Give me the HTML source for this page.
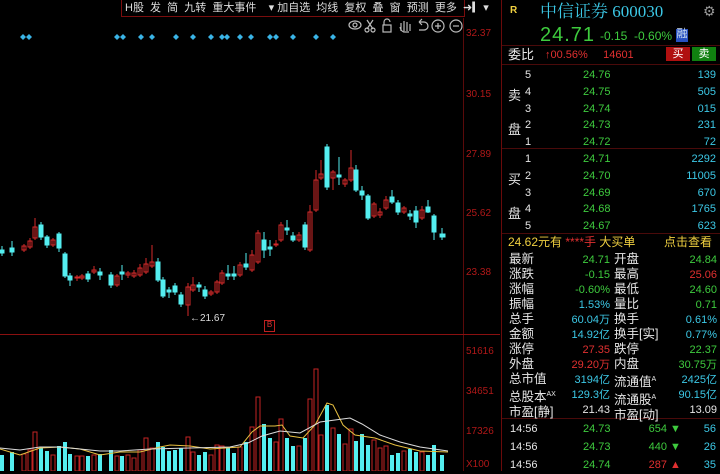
<!DOCTYPE html>
<html><head><meta charset="utf-8"><style>
*{margin:0;padding:0}
body{width:720px;height:471px;background:#000;overflow:hidden;position:relative;font-family:"Liberation Sans","Noto Sans CJK SC",sans-serif;color:#ddd}
.a{position:absolute;white-space:nowrap;line-height:1}
.tb{font-size:11px;color:#ddd}
.ax{font-size:10px;color:#b01818}
.rp{font-size:13px}
.g{color:#3ecb3e}.c{color:#3cc8e6}.r{color:#e03030}.w{color:#e6e6e6}.y{color:#f0d040}
</style></head><body>

<!-- toolbar -->
<div class="a" style="left:121px;top:0;width:342px;height:16px;border:1px solid #7a0d0d;border-top:none"></div>
<div class="a tb" style="left:125px;top:3px;word-spacing:0">H股&nbsp; 发&nbsp; 简&nbsp; 九转&nbsp; 重大事件&nbsp;&nbsp;&nbsp; ▾ 加自选&nbsp; 均线&nbsp; 复权&nbsp; 叠&nbsp; 窗&nbsp; 预测&nbsp; 更多&nbsp; ➜▎▾</div>
<svg class="a" style="left:345px;top:17px" width="120" height="16" stroke="#bbb" fill="none" stroke-width="1.2">
<ellipse cx="10" cy="8" rx="6" ry="4"/><circle cx="10" cy="8" r="2"/>
<path d="M22 3 L28 12 M28 3 L22 12"/><circle cx="22" cy="13" r="2"/><circle cx="28" cy="13" r="2"/>
<rect x="38" y="8" width="8" height="7"/><path d="M39 8 V5 a3 3 0 0 1 6 0"/>
<path d="M56 14 V6 M59 14 V4 M62 14 V5 M65 14 V7 M55 10 Q56 15 60 15 H64"/>
<path d="M74 5 H79 a4 4 0 0 1 0 8 H74 M74 5 l3 -3 M74 5 l3 3"/>
<circle cx="93" cy="9" r="6"/><path d="M90 9 H96 M93 6 V12"/>
<circle cx="111" cy="9" r="6"/><path d="M108 9 H114"/>
</svg>

<!-- diamonds -->
<svg class="a" style="left:0;top:32px" width="340" height="10" fill="#3ab4e6">
<defs><path id="d" d="M0 5 L3 2 L6 5 L3 8Z"/></defs>
<use href="#d" x="20"/><use href="#d" x="26"/><use href="#d" x="114"/><use href="#d" x="120"/><use href="#d" x="138"/><use href="#d" x="149"/><use href="#d" x="173"/><use href="#d" x="190"/><use href="#d" x="208"/><use href="#d" x="219"/><use href="#d" x="224"/><use href="#d" x="237"/><use href="#d" x="248"/><use href="#d" x="267"/><use href="#d" x="273"/><use href="#d" x="290"/><use href="#d" x="313"/><use href="#d" x="330"/>
</svg>

<!-- axes -->
<div class="a" style="left:463px;top:18px;width:1px;height:453px;background:#5a0a0a"></div>
<div class="a" style="left:0;top:334px;width:500px;height:1px;background:#8a1010"></div>
<div class="a" style="left:501px;top:0;width:1px;height:471px;background:#6a0a0a"></div>
<div class="a ax" style="left:466px;top:29px">32.37</div>
<div class="a ax" style="left:466px;top:90px">30.15</div>
<div class="a ax" style="left:466px;top:150px">27.89</div>
<div class="a ax" style="left:466px;top:209px">25.62</div>
<div class="a ax" style="left:466px;top:268px">23.38</div>
<div class="a ax" style="left:466px;top:347px">51616</div>
<div class="a ax" style="left:466px;top:387px">34651</div>
<div class="a ax" style="left:466px;top:427px">17326</div>
<div class="a ax" style="left:466px;top:460px">X100</div>
<div class="a" style="left:190px;top:314px;font-size:10px;color:#ddd">←21.67</div>
<div class="a" style="left:264px;top:320px;width:9px;height:10px;border:1px solid #c02020;font-size:8px;color:#e03030;text-align:center">B</div>

<!-- candles -->
<svg class="a" style="left:0;top:0" width="463" height="471">
<g stroke="#d42a2a" fill="none" stroke-width="1">
<path d="M24 244V252M30 238V249M35 218V240M53 238V247M77 275V281M82 274V280M94 266V274M117 274V287M128 271V278M134 270V278M140 264V277M146 258V274M152 245V268M188 283V316M193 277V292M211 290V296M217 280V294M222 270V285M240 262V277M252 250V272M258 230V264M276 240V247M281 222V242M299 232V242M310 205V252M316 170V212M321 160V180M333 170V190M345 178V187M351 150V182M374 202V218M380 208V218M386 196V210M404 206V214M422 206V220"/>
<rect x="22" y="246" width="4" height="4"/><rect x="28" y="241" width="4" height="6"/><rect x="33" y="227" width="4" height="11"/><rect x="51" y="240" width="4" height="5"/><rect x="75" y="277" width="4" height="1"/><rect x="80" y="276" width="4" height="2"/><rect x="92" y="270" width="4" height="2"/><rect x="115" y="276" width="4" height="9"/><rect x="126" y="273" width="4" height="2"/><rect x="132" y="273" width="4" height="3"/><rect x="138" y="268" width="4" height="7"/><rect x="144" y="264" width="4" height="8"/><rect x="150" y="262" width="4" height="4"/><rect x="186" y="287" width="4" height="18"/><rect x="191" y="285" width="4" height="5"/><rect x="209" y="292" width="4" height="2"/><rect x="215" y="282" width="4" height="10"/><rect x="220" y="273" width="4" height="10"/><rect x="238" y="265" width="4" height="10"/><rect x="250" y="255" width="4" height="15"/><rect x="256" y="233" width="4" height="29"/><rect x="274" y="244" width="4" height="1"/><rect x="279" y="225" width="4" height="15"/><rect x="297" y="235" width="4" height="5"/><rect x="308" y="212" width="4" height="38"/><rect x="314" y="180" width="4" height="30"/><rect x="319" y="174" width="4" height="4"/><rect x="331" y="172" width="4" height="6"/><rect x="343" y="180" width="4" height="4"/><rect x="349" y="168" width="4" height="12"/><rect x="372" y="204" width="4" height="12"/><rect x="378" y="212" width="4" height="3"/><rect x="384" y="200" width="4" height="8"/><rect x="402" y="208" width="4" height="4"/><rect x="420" y="210" width="4" height="8"/>
</g>
<g stroke="#54eef0" fill="#54eef0" stroke-width="1">
<path d="M2 246V256M12 241V256M41 222V240M47 235V248M59 232V252M65 252V278M70 273V286M88 271V282M100 268V280M111 272V288M122 265V280M158 258V282M163 277V298M169 287V298M175 283V295M181 292V307M199 282V292M205 286V299M228 265V280M234 266V280M246 253V270M264 232V258M270 240V256M287 220V235M293 232V242M305 222V250M327 144V190M339 157V185M356 165V192M362 186V200M368 194V220M392 190V204M398 200V215M410 210V220M416 206V228M428 200V213M434 214V240M442 228V240"/>
<rect x="0" y="250" width="4" height="3"/><rect x="10" y="248" width="4" height="4"/><rect x="39" y="225" width="4" height="12"/><rect x="45" y="237" width="4" height="8"/><rect x="57" y="234" width="4" height="14"/><rect x="63" y="254" width="4" height="22"/><rect x="68" y="276" width="4" height="4"/><rect x="86" y="274" width="4" height="5"/><rect x="98" y="272" width="4" height="3"/><rect x="109" y="275" width="4" height="10"/><rect x="120" y="272" width="4" height="2"/><rect x="156" y="262" width="4" height="18"/><rect x="161" y="280" width="4" height="16"/><rect x="167" y="290" width="4" height="2"/><rect x="173" y="286" width="4" height="6"/><rect x="179" y="295" width="4" height="9"/><rect x="197" y="285" width="4" height="2"/><rect x="203" y="290" width="4" height="6"/><rect x="226" y="274" width="4" height="2"/><rect x="232" y="274" width="4" height="2"/><rect x="244" y="264" width="4" height="3"/><rect x="262" y="240" width="4" height="10"/><rect x="268" y="247" width="4" height="2"/><rect x="285" y="228" width="4" height="2"/><rect x="291" y="236" width="4" height="4"/><rect x="303" y="225" width="4" height="22"/><rect x="325" y="147" width="4" height="40"/><rect x="337" y="175" width="4" height="2"/><rect x="354" y="170" width="4" height="20"/><rect x="360" y="191" width="4" height="4"/><rect x="366" y="196" width="4" height="22"/><rect x="390" y="197" width="4" height="5"/><rect x="396" y="203" width="4" height="9"/><rect x="408" y="214" width="4" height="2"/><rect x="414" y="211" width="4" height="11"/><rect x="426" y="207" width="4" height="5"/><rect x="432" y="216" width="4" height="16"/><rect x="440" y="234" width="5" height="3"/>
</g>
<!-- volume -->
<g stroke="#c42424" fill="none">
<rect x="22" y="454" width="4" height="17"/><rect x="28" y="450" width="4" height="21"/><rect x="33" y="432" width="4" height="39"/><rect x="51" y="455" width="4" height="16"/><rect x="75" y="456" width="4" height="15"/><rect x="80" y="456" width="4" height="15"/><rect x="92" y="455" width="4" height="16"/><rect x="115" y="456" width="4" height="15"/><rect x="126" y="455" width="4" height="16"/><rect x="132" y="458" width="4" height="13"/><rect x="138" y="450" width="4" height="21"/><rect x="144" y="438" width="4" height="33"/><rect x="150" y="448" width="4" height="23"/><rect x="186" y="437" width="4" height="34"/><rect x="191" y="452" width="4" height="19"/><rect x="209" y="455" width="4" height="16"/><rect x="215" y="445" width="4" height="26"/><rect x="220" y="446" width="4" height="25"/><rect x="238" y="447" width="4" height="24"/><rect x="250" y="427" width="4" height="44"/><rect x="256" y="397" width="4" height="74"/><rect x="274" y="442" width="4" height="29"/><rect x="279" y="419" width="4" height="52"/><rect x="297" y="446" width="4" height="25"/><rect x="308" y="399" width="4" height="72"/><rect x="314" y="369" width="4" height="102"/><rect x="319" y="435" width="4" height="36"/><rect x="331" y="428" width="4" height="43"/><rect x="343" y="444" width="4" height="27"/><rect x="349" y="429" width="4" height="42"/><rect x="372" y="440" width="4" height="31"/><rect x="378" y="448" width="4" height="23"/><rect x="384" y="446" width="4" height="25"/><rect x="402" y="451" width="4" height="20"/><rect x="420" y="452" width="4" height="19"/>
</g>
<g fill="#54eef0">
<rect x="0" y="455" width="4" height="16"/><rect x="10" y="452" width="4" height="19"/><rect x="39" y="448" width="4" height="23"/><rect x="45" y="451" width="4" height="20"/><rect x="57" y="446" width="4" height="25"/><rect x="63" y="442" width="4" height="29"/><rect x="68" y="454" width="4" height="17"/><rect x="86" y="456" width="4" height="15"/><rect x="98" y="454" width="4" height="17"/><rect x="109" y="450" width="4" height="21"/><rect x="120" y="456" width="4" height="15"/><rect x="156" y="442" width="4" height="29"/><rect x="161" y="447" width="4" height="24"/><rect x="167" y="451" width="4" height="20"/><rect x="173" y="450" width="4" height="21"/><rect x="179" y="448" width="4" height="23"/><rect x="197" y="455" width="4" height="16"/><rect x="203" y="452" width="4" height="19"/><rect x="226" y="447" width="4" height="24"/><rect x="232" y="453" width="4" height="18"/><rect x="244" y="442" width="4" height="29"/><rect x="262" y="424" width="4" height="47"/><rect x="268" y="438" width="4" height="33"/><rect x="285" y="438" width="4" height="33"/><rect x="291" y="446" width="4" height="25"/><rect x="303" y="438" width="4" height="33"/><rect x="325" y="405" width="4" height="66"/><rect x="337" y="434" width="4" height="37"/><rect x="354" y="441" width="4" height="30"/><rect x="360" y="434" width="4" height="37"/><rect x="366" y="445" width="4" height="26"/><rect x="390" y="455" width="4" height="16"/><rect x="396" y="453" width="4" height="18"/><rect x="408" y="449" width="4" height="22"/><rect x="414" y="452" width="4" height="19"/><rect x="426" y="455" width="4" height="16"/><rect x="432" y="445" width="4" height="26"/><rect x="440" y="455" width="4" height="16"/>
</g>
<polyline fill="none" stroke="#e8c040" stroke-width="1" points="0,449 20,455 40,448 60,447 80,449 100,455 120,452 140,452 160,447 170,445 190,446 210,449 240,447 252,432 260,426 275,426 282,425 290,436 303,438 315,425 327,403 333,405 343,425 355,435 375,438 395,445 420,451 448,452"/>
<polyline fill="none" stroke="#dcdcdc" stroke-width="1" points="0,448 20,450 40,447 60,447 80,449 100,451 120,451 150,449 190,448 230,447 248,443 262,436 280,431 300,433 320,422 335,420 350,418 362,424 380,435 400,442 420,447 448,451"/>
</svg>

<!-- right panel -->
<div class="a y" style="left:510px;top:6px;font-size:10px;font-weight:bold">R</div>
<div class="a c" style="left:540px;top:3px;font-size:17px;font-family:'Liberation Serif','Noto Serif CJK SC',serif">中信证券 600030</div>
<div class="a" style="left:703px;top:4px;font-size:14px;color:#999">⚙</div>
<div class="a g" style="left:540px;top:25px;font-size:20px;letter-spacing:1px">24.71</div>
<div class="a g" style="left:600px;top:30px;font-size:12px">-0.15&nbsp;&nbsp;-0.60%</div>
<div class="a" style="left:676px;top:29px;width:12px;height:13px;background:#2850c0;color:#cde;font-size:11px;text-align:center">融</div>
<div class="a" style="left:502px;top:45px;width:218px;height:1px;background:#4a0a0a"></div>
<div class="a w rp" style="left:508px;top:48px">委比</div>
<div class="a r" style="left:545px;top:50px;font-size:11px">↑00.56%&nbsp;&nbsp;&nbsp;&nbsp;&nbsp;14601</div>
<div class="a" style="left:666px;top:47px;width:24px;height:14px;background:#b01010;color:#fff;font-size:11px;text-align:center;line-height:14px">买</div>
<div class="a" style="left:692px;top:47px;width:24px;height:14px;background:#108010;color:#fff;font-size:11px;text-align:center;line-height:14px">卖</div>
<div class="a" style="left:502px;top:64px;width:218px;height:1px;background:#4a0a0a"></div>
<div class="a" style="left:502px;top:148px;width:218px;height:1px;background:#4a0a0a"></div>
<div class="a" style="left:502px;top:233px;width:218px;height:1px;background:#4a0a0a"></div>
<div class="a" style="left:502px;top:418px;width:218px;height:1px;background:#4a0a0a"></div>

<div class="a w rp" style="left:508px;top:79px;line-height:34px">卖<br>盘</div>
<div class="a w rp" style="left:508px;top:163px;line-height:34px">买<br>盘</div>
<div class="a w" style="left:525px;top:67px;font-size:11px;line-height:16.8px">5<br>4<br>3<br>2<br>1<br>1<br>2<br>3<br>4<br>5</div>
<div class="a g" style="left:583px;top:67px;font-size:11px;line-height:16.8px">24.76<br>24.75<br>24.74<br>24.73<br>24.72<br>24.71<br>24.70<br>24.69<br>24.68<br>24.67</div>
<div class="a c" style="right:4px;top:67px;font-size:11px;line-height:16.8px;text-align:right">139<br>505<br>015<br>231<br>72<br>2292<br>11005<br>670<br>1765<br>623</div>

<div class="a y" style="left:508px;top:236px;font-size:12px">24.62元有 <span class="r">****手</span> 大买单</div>
<div class="a y" style="left:664px;top:236px;font-size:12px">点击查看</div>

<div class="a w" style="left:509px;top:252px;font-size:12.5px;line-height:15px">最新<br>涨跌<br>涨幅<br>振幅<br>总手<br>金额<br>涨停<br>外盘<br>总市值<br>总股本<sup style="font-size:7px">AX</sup><br>市盈[静]</div>
<div class="a" style="left:548px;top:253px;width:62px;text-align:right;font-size:11px;line-height:15px"><span class="g">24.71</span><br><span class="g">-0.15</span><br><span class="g">-0.60%</span><br><span class="c">1.53%</span><br><span class="c">60.04万</span><br><span class="c">14.92亿</span><br><span class="r">27.35</span><br><span class="r">29.20万</span><br><span class="c">3194亿</span><br><span class="c">129.3亿</span><br><span class="w">21.43</span></div>
<div class="a w" style="left:614px;top:252px;font-size:12.5px;line-height:15px">开盘<br>最高<br>最低<br>量比<br>换手<br>换手[实]<br>跌停<br>内盘<br>流通值<sup style="font-size:7px">A</sup><br>流通股<sup style="font-size:7px">A</sup><br>市盈[动]</div>
<div class="a" style="right:3px;top:253px;text-align:right;font-size:11px;line-height:15px"><span class="g">24.84</span><br><span class="r">25.06</span><br><span class="g">24.60</span><br><span class="g">0.71</span><br><span class="c">0.61%</span><br><span class="c">0.77%</span><br><span class="g">22.37</span><br><span class="g">30.75万</span><br><span class="c">2425亿</span><br><span class="c">90.15亿</span><br><span class="w">13.09</span></div>

<div class="a w" style="left:510px;top:420px;font-size:11px;line-height:18px">14:56<br>14:56<br>14:56</div>
<div class="a g" style="left:583px;top:420px;font-size:11px;line-height:18px">24.73<br>24.73<br>24.74</div>
<div class="a" style="left:636px;top:420px;width:31px;text-align:right;font-size:11px;line-height:18px"><span class="g">654</span><br><span class="g">440</span><br><span class="r">287</span></div>
<div class="a" style="left:670px;top:420px;font-size:11px;line-height:18px"><span class="g">▼</span><br><span class="g">▼</span><br><span class="r">▲</span></div>
<div class="a c" style="right:4px;top:420px;text-align:right;font-size:11px;line-height:18px">56<br>26<br>35</div>
</body></html>
